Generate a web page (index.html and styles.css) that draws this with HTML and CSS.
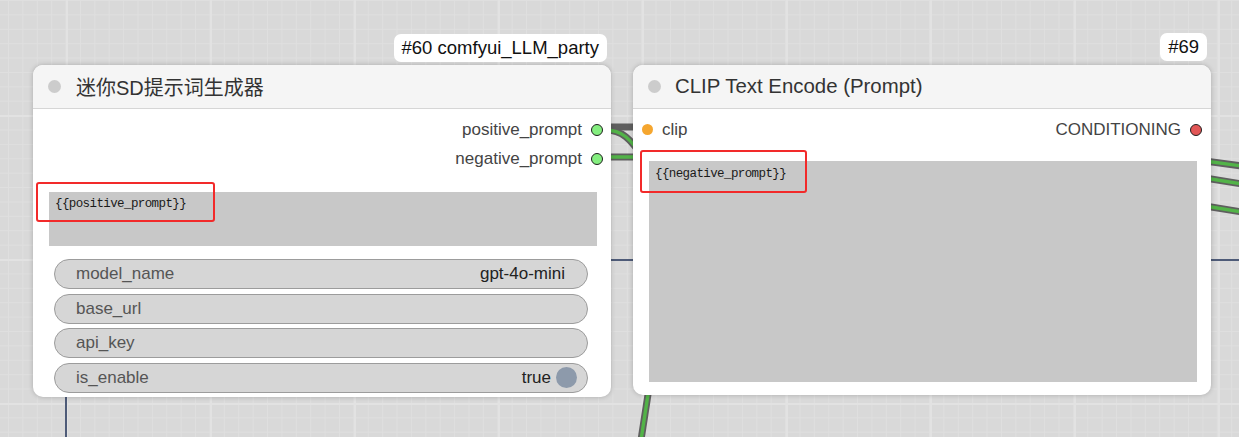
FILE: index.html
```html
<!DOCTYPE html>
<html lang="zh">
<head>
<meta charset="utf-8">
<title>ComfyUI nodes</title>
<link rel="stylesheet" href="styles.css">
</head>
<body>
<div class="canvas">
  <svg class="wires" width="1239" height="437" viewBox="0 0 1239 437">
    <g class="link-blue">
      <path d="M605 260 L1239 260"/>
      <path d="M66 390 L66 437"/>
    </g>
    <g class="link-outer">
      <path d="M605 127 L645 127"/>
      <path d="M605 130 C622 130, 630 138, 645 160"/>
      <path d="M605 157 L645 157"/>
      <path d="M649 388 L641 440"/>
      <path d="M1205 161 L1242 166"/>
      <path d="M1205 178 L1242 184"/>
      <path d="M1205 206 L1242 212"/>
    </g>
    <g class="link-inner">
      <path d="M605 130 C622 130, 630 138, 645 160"/>
      <path d="M605 157 L645 157"/>
      <path d="M649 388 L641 440"/>
      <path d="M1205 161 L1242 166"/>
      <path d="M1205 178 L1242 184"/>
      <path d="M1205 206 L1242 212"/>
    </g>
  </svg>

  <div class="node node-llm">
    <div class="badge">#60 comfyui_LLM_party</div>
    <div class="node-header">
      <span class="hdot"></span>
      <span class="title title-cjk">迷你SD提示词生成器</span>
    </div>
    <div class="node-body">
      <div class="slots">
        <div class="slot slot-out"><span class="slot-label">positive_prompt</span><span class="sdot green"></span></div>
        <div class="slot slot-out"><span class="slot-label">negative_prompt</span><span class="sdot green"></span></div>
      </div>
      <div class="textarea textarea-short">{{positive_prompt}}</div>
      <div class="widgets">
        <div class="widget"><span class="w-label">model_name</span><span class="w-value">gpt-4o-mini</span></div>
        <div class="widget"><span class="w-label">base_url</span></div>
        <div class="widget"><span class="w-label">api_key</span></div>
        <div class="widget widget-toggle"><span class="w-label">is_enable</span><span class="w-value">true</span><span class="toggle"></span></div>
      </div>
    </div>
    <div class="mark mark-left"></div>
  </div>

  <div class="node node-clip">
    <div class="badge">#69</div>
    <div class="node-header">
      <span class="hdot"></span>
      <span class="title">CLIP Text Encode (Prompt)</span>
    </div>
    <div class="node-body">
      <div class="slots">
        <div class="slot slot-io">
          <span class="slot-in"><span class="sdot orange"></span><span class="slot-label">clip</span></span>
          <span class="slot-outr"><span class="slot-label">CONDITIONING</span><span class="sdot red"></span></span>
        </div>
      </div>
      <div class="textarea textarea-tall">{{negative_prompt}}</div>
    </div>
    <div class="mark mark-right"></div>
  </div>
</div>
</body>
</html>
```

FILE: styles.css
```css
* { box-sizing: border-box; }

html, body {
  margin: 0;
  padding: 0;
}

body {
  width: 1239px;
  height: 437px;
  overflow: hidden;
  font-family: "Liberation Sans", Arial, "Noto Sans CJK SC", sans-serif;
}

.canvas {
  position: relative;
  width: 1239px;
  height: 437px;
  overflow: hidden;
  background-color: #d9d9d9;
  background-image:
    linear-gradient(to right, #e2e2e2 2px, transparent 2px),
    linear-gradient(to bottom, #e2e2e2 2px, transparent 2px),
    linear-gradient(to right, #dfdfdf 1px, transparent 1px),
    linear-gradient(to bottom, #dfdfdf 1px, transparent 1px);
  background-size: 144px 144px, 144px 144px, 14.4px 14.4px, 14.4px 14.4px;
  background-position: 66px 0, 0 115px, 8px 0, 0 0;
}

.wires {
  position: absolute;
  left: 0;
  top: 0;
}

.wires path { fill: none; }
.link-blue path { stroke: #4e5b78; stroke-width: 2; }
.link-outer path { stroke: #5f5f5f; stroke-width: 7; }
.link-inner path { stroke: #52b348; stroke-width: 3.4; }

/* nodes */
.node {
  position: absolute;
  top: 65px;
  width: 578px;
  background: #ffffff;
  border-radius: 10px;
  box-shadow: 0 0 5px rgba(0, 0, 0, 0.22);
  display: flex;
  flex-direction: column;
}

.node-llm { left: 33px; height: 332px; }
.node-clip { left: 633px; height: 330px; }

.badge {
  position: absolute;
  right: 4px;
  top: -31px;
  height: 28px;
  padding: 0 8px;
  background: #ffffff;
  border-radius: 7px;
  color: #111;
  font-size: 18.5px;
  line-height: 28px;
  white-space: nowrap;
}

.node-clip .badge { top: -32px; padding: 0 8px; }

.node-header {
  height: 44px;
  flex: none;
  display: flex;
  align-items: center;
  padding-left: 15px;
  background: #f5f5f5;
  border-bottom: 1px solid #d6d6d6;
  border-radius: 10px 10px 0 0;
}

.hdot {
  width: 13px;
  height: 13px;
  border-radius: 50%;
  background: #cccccc;
  flex: none;
}

.title {
  margin-left: 15px;
  font-size: 20.4px;
  color: #333;
  white-space: nowrap;
  font-family: "Liberation Sans", Arial, "Noto Sans CJK SC", sans-serif;
}

.title-cjk { font-size: 20px; }

.node-clip .title { margin-left: 14px; }

.node-body {
  display: flex;
  flex-direction: column;
  padding-top: 6px;
}

.slots {
  display: flex;
  flex-direction: column;
}

.slot {
  height: 29px;
  display: flex;
  align-items: center;
  font-size: 17px;
  color: #444;
  white-space: nowrap;
}

.slot-out {
  justify-content: flex-end;
  padding-right: 8px;
  gap: 9px;
}

.slot-io {
  justify-content: space-between;
  padding: 0 9px 0 9px;
}

.slot-in, .slot-outr {
  display: flex;
  align-items: center;
}

.slot-in { gap: 9px; }
.slot-in .slot-label { color: #444; }
.slot-outr { gap: 9px; }
.slot-outr .slot-label { color: #444; }

.sdot {
  width: 12px;
  height: 12px;
  border-radius: 50%;
  flex: none;
}

.sdot.green { background: #84ee7f; border: 1px solid #1f1f1f; }
.sdot.orange { background: #f5a62f; width: 11px; height: 11px; }
.sdot.red { background: #e25656; border: 1px solid #1f1f1f; }

.textarea {
  margin-left: 16px;
  margin-right: 14px;
  background: #c8c8c8;
  font-family: "Liberation Mono", "Courier New", monospace;
  font-size: 12.5px;
  letter-spacing: -0.6px;
  line-height: 14px;
  color: #1a1a1a;
  padding: 5px 6px;
  white-space: nowrap;
}

.textarea-short { margin-top: 19px; height: 54px; }
.textarea-tall { margin-top: 17px; height: 221px; padding-top: 6px; }

.widgets {
  margin: 13px 23px 0 21px;
  display: flex;
  flex-direction: column;
  gap: 4.5px;
}

.widget {
  height: 30px;
  border-radius: 15px;
  background: #d6d6d6;
  border: 1px solid #9c9c9c;
  display: flex;
  align-items: center;
  padding: 0 22px 0 21px;
  font-size: 17px;
  white-space: nowrap;
}

.w-label { color: #555; flex: 1; }
.w-value { color: #222; }

.widget-toggle { padding-right: 10px; }

.toggle {
  width: 21px;
  height: 21px;
  border-radius: 50%;
  background: #8d9aab;
  margin-left: 5px;
  flex: none;
}

/* red highlight marks drawn over the nodes */
.mark {
  position: absolute;
  border: 2px solid #f22a2a;
  border-radius: 3px;
}

.mark-left { left: 3px; top: 117px; width: 179px; height: 40px; }
.mark-right { left: 7px; top: 85px; width: 167px; height: 43px; }
```
